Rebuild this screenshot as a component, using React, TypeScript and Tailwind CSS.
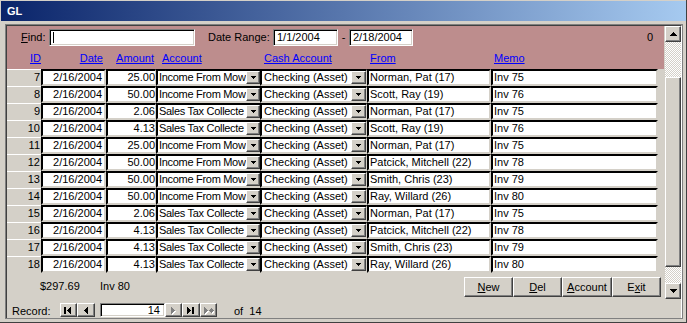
import React from "react";

type Row = { id: number; amt: string; acct: string; from: string; memo: string };
const INC = "Income From Mow";
const TAX = "Sales Tax Collecte";
const rows: Row[] = [
  { id: 7, amt: "25.00", acct: INC, from: "Norman, Pat (17)", memo: "Inv 75" },
  { id: 8, amt: "50.00", acct: INC, from: "Scott, Ray (19)", memo: "Inv 76" },
  { id: 9, amt: "2.06", acct: TAX, from: "Norman, Pat (17)", memo: "Inv 75" },
  { id: 10, amt: "4.13", acct: TAX, from: "Scott, Ray (19)", memo: "Inv 76" },
  { id: 11, amt: "25.00", acct: INC, from: "Norman, Pat (17)", memo: "Inv 75" },
  { id: 12, amt: "50.00", acct: INC, from: "Patcick, Mitchell (22)", memo: "Inv 78" },
  { id: 13, amt: "50.00", acct: INC, from: "Smith, Chris (23)", memo: "Inv 79" },
  { id: 14, amt: "50.00", acct: INC, from: "Ray, Willard (26)", memo: "Inv 80" },
  { id: 15, amt: "2.06", acct: TAX, from: "Norman, Pat (17)", memo: "Inv 75" },
  { id: 16, amt: "4.13", acct: TAX, from: "Patcick, Mitchell (22)", memo: "Inv 78" },
  { id: 17, amt: "4.13", acct: TAX, from: "Smith, Chris (23)", memo: "Inv 79" },
  { id: 18, amt: "4.13", acct: TAX, from: "Ray, Willard (26)", memo: "Inv 80" },
];

const RAISED =
  "bg-[#d4d0c8] border border-t-white border-l-white border-r-[#404040] border-b-[#404040] shadow-[inset_-1px_-1px_0_#808080]";
const SUNKEN =
  "bg-white border border-t-[#808080] border-l-[#808080] border-r-white border-b-white shadow-[inset_1px_1px_0_#000000,inset_-1px_-1px_0_#d4d0c8]";
const CELL =
  "bg-white border-t-2 border-l-2 border-b-2 border-t-black border-l-black border-b-[#d4d0c8] whitespace-nowrap overflow-hidden";

function DownArrow({ color = "#000" }: { color?: string }) {
  return (
    <svg width="7" height="4" shapeRendering="crispEdges" fill={color}>
      <rect x="0" y="0" width="7" height="1" />
      <rect x="1" y="1" width="5" height="1" />
      <rect x="2" y="2" width="3" height="1" />
      <rect x="3" y="3" width="1" height="1" />
    </svg>
  );
}

function UpArrow() {
  return (
    <svg width="7" height="4" shapeRendering="crispEdges" fill="#000">
      <rect x="3" y="0" width="1" height="1" />
      <rect x="2" y="1" width="3" height="1" />
      <rect x="1" y="2" width="5" height="1" />
      <rect x="0" y="3" width="7" height="1" />
    </svg>
  );
}

function ComboBtn({ wide }: { wide?: boolean }) {
  return (
    <div
      className={`${RAISED} ${wide ? "w-[15px]" : "w-[14px]"} h-[13px] shrink-0 flex items-center justify-center`}
    >
      <svg width="5" height="3" shapeRendering="crispEdges" fill="#000">
        <rect x="0" y="0" width="5" height="1" />
        <rect x="1" y="1" width="3" height="1" />
        <rect x="2" y="2" width="1" height="1" />
      </svg>
    </div>
  );
}

function NavIcon({ kind }: { kind: "first" | "prev" | "next" | "last" | "new" }) {
  const disabled = kind === "next" || kind === "new";
  const c = disabled ? "#808080" : "#000";
  const left = (x: number) => (
    <>
      <rect x={x + 3} y="0" width="1" height="7" />
      <rect x={x + 2} y="1" width="1" height="5" />
      <rect x={x + 1} y="2" width="1" height="3" />
      <rect x={x} y="3" width="1" height="1" />
    </>
  );
  const right = (x: number) => (
    <>
      <rect x={x} y="0" width="1" height="7" />
      <rect x={x + 1} y="1" width="1" height="5" />
      <rect x={x + 2} y="2" width="1" height="3" />
      <rect x={x + 3} y="3" width="1" height="1" />
    </>
  );
  let body: React.ReactNode = null;
  if (kind === "first")
    body = (
      <>
        <rect x="0" y="0" width="2" height="7" />
        {left(3)}
      </>
    );
  if (kind === "prev") body = left(2);
  if (kind === "next") body = right(2);
  if (kind === "last")
    body = (
      <>
        {right(0)}
        <rect x="5" y="0" width="2" height="7" />
      </>
    );
  if (kind === "new")
    body = (
      <>
        {right(0)}
        <rect x="7" y="1" width="1" height="5" />
        <rect x="5" y="3" width="5" height="1" />
        <rect x="6" y="2" width="3" height="3" />
      </>
    );
  return (
    <svg width="10" height="8" shapeRendering="crispEdges">
      {disabled && (
        <g fill="#ffffff" transform="translate(1,1)">
          {body}
        </g>
      )}
      <g fill={c}>{body}</g>
    </svg>
  );
}

function NavBtn({ kind, w }: { kind: "first" | "prev" | "next" | "last" | "new"; w: string }) {
  return (
    <div className={`${RAISED} ${w} h-[14px] flex items-center justify-center pl-px pt-px`}>
      <NavIcon kind={kind} />
    </div>
  );
}

function Btn({ pre, u, post }: { pre: string; u: string; post: string }) {
  return (
    <div className={`${RAISED} w-[49px] h-[20px] flex items-center justify-center`}>
      <span>
        {pre}
        <span className="underline">{u}</span>
        {post}
      </span>
    </div>
  );
}

export default function App() {
  return (
    <div className="w-[687px] h-[323px] bg-[#d4d0c8] font-['Liberation_Sans',Arial,sans-serif] text-[11px] leading-[13px] text-black flex flex-col border-r border-b border-r-[#404040] border-b-[#404040] overflow-hidden">
      {/* title bar */}
      <div className="mt-px ml-px mr-0 h-[20px] shrink-0 bg-[linear-gradient(to_right,#0a246a,#a6caf0)] flex items-center pl-[6px]">
        <span className="text-white font-bold text-[11px] leading-[13px]">GL</span>
      </div>
      <div className="h-[3px] shrink-0" />
      {/* client edge */}
      <div className="ml-[5px] mr-[3px] h-[295px] shrink-0 border-t border-l border-t-[#808080] border-l-[#808080] border-r border-b border-r-[#808080] border-b-[#808080]">
        <div className="h-full border-t border-l border-t-[#404040] border-l-[#404040] border-r border-r-white flex flex-col">
          {/* main */}
          <div className="flex h-[274px]">
            {/* form */}
            <div className="w-[657px] flex flex-col">
              {/* header (pink) */}
              <div className="h-[43px] bg-[#bd8d8d] flex flex-col">
                <div className="mt-[3px] h-[16px] flex items-center">
                  <div className="w-[42px] pl-[14px]">
                    <span className="underline">F</span>ind:
                  </div>
                  <div className={`${SUNKEN} w-[146px] h-[17px] flex items-center pl-[3px]`}>
                    <div className="w-px h-[11px] bg-black" />
                  </div>
                  <div className="ml-[13px] w-[65px]">Date Range:</div>
                  <div className={`${SUNKEN} w-[65px] h-[17px] pl-[3px] pt-px`}>1/1/2004</div>
                  <div className="w-[11px] text-center">-</div>
                  <div className={`${SUNKEN} w-[64px] h-[17px] pl-[3px] pt-px`}>2/18/2004</div>
                  <div className="flex-1 text-right pr-[11px]">0</div>
                </div>
                <div className="mt-[7px] h-[13px] flex text-[#0000ff] whitespace-nowrap">
                  <div className="w-[34px] text-right">
                    <span className="underline">ID</span>
                  </div>
                  <div className="w-[65px] text-right pr-[3px]">
                    <span className="underline">Date</span>
                  </div>
                  <div className="w-[50px] text-right pr-[2px]">
                    <span className="underline">Amount</span>
                  </div>
                  <div className="w-[104px] pl-[6px]">
                    <span className="underline">Account</span>
                  </div>
                  <div className="w-[107px] pl-[4px]">
                    <span className="underline">Cash Account</span>
                  </div>
                  <div className="w-[124px] pl-[3px]">
                    <span className="underline">From</span>
                  </div>
                  <div className="w-[167px] pl-[3px]">
                    <span className="underline">Memo</span>
                  </div>
                </div>
              </div>
              {/* rows */}
              <div className="flex flex-col">
                {rows.map((r) => (
                  <div key={r.id} className="flex h-[17px]">
                    <div className="w-[34px] bg-[#d4d0c8] border-t border-t-white text-right pr-px pt-px">
                      {r.id}
                    </div>
                    <div className={`${CELL} w-[65px] border-r-2 border-r-[#d4d0c8] text-right pr-[2px]`}>
                      2/16/2004
                    </div>
                    <div className={`${CELL} w-[50px] border-r border-r-[#d4d0c8] text-right`}>
                      {r.amt}
                    </div>
                    <div className={`${CELL} w-[104px] flex`}>
                      <div className="flex-1 overflow-hidden whitespace-nowrap pl-px tracking-[-0.3px]">{r.acct}</div>
                      <ComboBtn />
                    </div>
                    <div className={`${CELL} w-[107px] flex border-r border-r-[#d4d0c8]`}>
                      <div className="flex-1 overflow-hidden whitespace-nowrap pl-[2px]">Checking (Asset)</div>
                      <ComboBtn wide />
                    </div>
                    <div className={`${CELL} w-[124px] border-r-2 border-r-[#d4d0c8] pl-px`}>{r.from}</div>
                    <div className={`${CELL} w-[167px] border-r-2 border-r-[#d4d0c8] pl-px`}>{r.memo}</div>
                  </div>
                ))}
              </div>
              {/* footer */}
              <div className="h-[27px] flex items-start pt-[4px]">
                <div className="ml-[33px] w-[60px] mt-[3px]">$297.69</div>
                <div className="mt-[3px]">Inv 80</div>
                <div className="ml-auto mr-[3px] flex">
                  <Btn pre="" u="N" post="ew" />
                  <Btn pre="" u="D" post="el" />
                  <div className={`${RAISED} w-[50px] h-[20px] flex items-center justify-center`}>
                    <span>
                      <span className="underline">A</span>ccount
                    </span>
                  </div>
                  <Btn pre="E" u="x" post="it" />
                </div>
              </div>
            </div>
            {/* vertical scrollbar */}
            <div className="w-[17px] pl-px flex flex-col">
              <div className={`${RAISED} h-[16px] flex items-center justify-center`}>
                <UpArrow />
              </div>
              <div className="h-[35px] bg-[repeating-conic-gradient(#ffffff_0%_25%,#d4d0c8_0%_50%)] bg-[length:2px_2px]" />
              <div className={`${RAISED} h-[190px]`} />
              <div className="h-[16px] bg-[repeating-conic-gradient(#ffffff_0%_25%,#d4d0c8_0%_50%)] bg-[length:2px_2px]" />
              <div className={`${RAISED} h-[16px] flex items-center justify-center`}>
                <DownArrow />
              </div>
            </div>
          </div>
          {/* record navigation */}
          <div className="h-[18px] flex items-start pt-[3px]">
            <div className="w-[53px] pl-[5px] mt-[2px]">Record:</div>
            <NavBtn kind="first" w="w-[17px]" />
            <NavBtn kind="prev" w="w-[18px]" />
            <div className={`${SUNKEN} ml-[5px] w-[65px] h-[14px] text-right pr-[4px] leading-[12px]`}>14</div>
            <NavBtn kind="next" w="w-[17px]" />
            <NavBtn kind="last" w="w-[18px]" />
            <NavBtn kind="new" w="w-[17px]" />
            <div className="ml-[17px] mt-[2px]">of&nbsp;&nbsp;14</div>
          </div>
        </div>
      </div>
    </div>
  );
}
